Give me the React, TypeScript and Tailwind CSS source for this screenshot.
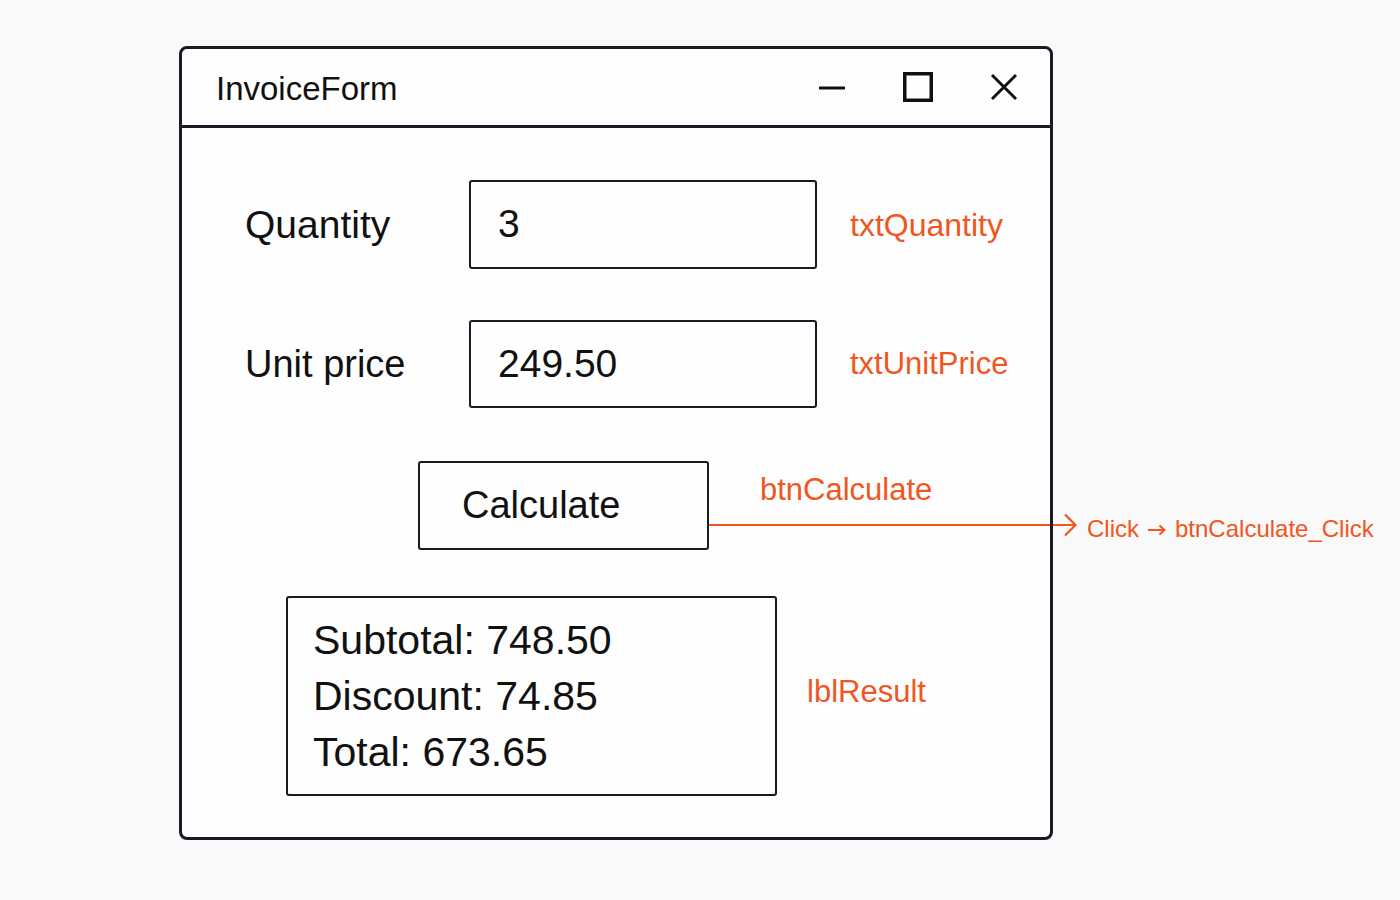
export default function App() {
  return (
    <div className="min-h-screen bg-[#f9f9f9] pt-[46px] pl-[179px] font-['Liberation_Sans',Arial,sans-serif] text-[#111]">
      <div className="relative w-[874px] h-[794px] rounded-[8px] bg-[#fefefe]">
        {/* window frame sits above the content so the event connector runs under it */}
        <div className="pointer-events-none absolute inset-0 z-10 rounded-[8px] border-[3px] border-[#161b26]" />

        <div className="flex flex-col p-[3px]">
          {/* Title bar */}
          <div className="flex h-[79px] items-center justify-between border-b-[3px] border-[#161b26] pl-[34px] pr-[31px]">
            <span className="pt-[3px] text-[33px] leading-none">InvoiceForm</span>
            <div className="flex items-center gap-[56px]">
              <svg width="30" height="30" viewBox="0 0 30 30" fill="none" stroke="#111" strokeWidth="3">
                <path d="M2 16h26" />
              </svg>
              <svg width="30" height="30" viewBox="0 0 30 30" fill="none" stroke="#111" strokeWidth="3.5">
                <rect x="1.75" y="1.75" width="26.5" height="26.5" />
              </svg>
              <svg width="30" height="30" viewBox="0 0 30 30" fill="none" stroke="#111" strokeWidth="3">
                <path d="M3 3l24 24M27 3L3 27" />
              </svg>
            </div>
          </div>

          {/* Quantity */}
          <div className="mt-[52px] flex items-center pl-[63px]">
            <span className="w-[224px] shrink-0 text-[39px] leading-none">Quantity</span>
            <div className="flex h-[89px] w-[348px] shrink-0 items-center rounded-[3px] border-2 border-[#161b26] pl-[27px] text-[39px]">
              3
            </div>
            <span className="ml-[33px] whitespace-nowrap text-[32px] text-[#f0561d]">txtQuantity</span>
          </div>

          {/* Unit price */}
          <div className="mt-[51px] flex items-center pl-[63px]">
            <span className="w-[224px] shrink-0 text-[38px] leading-none">Unit price</span>
            <div className="flex h-[88px] w-[348px] shrink-0 items-center rounded-[3px] border-2 border-[#161b26] pl-[27px] text-[39px]">
              249.50
            </div>
            <span className="ml-[33px] whitespace-nowrap text-[31px] text-[#f0561d]">txtUnitPrice</span>
          </div>

          {/* Calculate button + click handler annotation */}
          <div className="mt-[53px] flex pl-[236px]">
            <button className="flex h-[89px] w-[291px] shrink-0 items-center rounded-[3px] border-2 border-[#161b26] pl-[42px] text-[38px]">
              Calculate
            </button>
            <div className="flex shrink-0 flex-col">
              <span className="whitespace-nowrap pl-[51px] pt-[14px] text-[31px] leading-[30px] text-[#f0561d]">btnCalculate</span>
              <div className="mt-[8px] flex h-[24px] items-center">
                <div className="h-[2px] w-[352px] shrink-0 bg-[#f0561d]" />
                <svg className="shrink-0" width="16" height="24" viewBox="0 0 16 24" fill="none" stroke="#f0561d" strokeWidth="2.2">
                  <path d="M0 12h14M4 1.5l10.5 10.5L4 22.5" />
                </svg>
                <span className="ml-[10px] flex items-center whitespace-nowrap pt-[8px] text-[24px] text-[#f0561d]">
                  Click
                  <svg className="mx-[9px] mt-[2px]" width="18" height="12" viewBox="0 0 18 12" fill="none" stroke="#f0561d" strokeWidth="2">
                    <path d="M0 6h16M11.5 1.5L16.5 6l-5 4.5" />
                  </svg>
                  btnCalculate_Click
                </span>
              </div>
            </div>
          </div>

          {/* Result label */}
          <div className="mt-[46px] flex items-center pl-[104px]">
            <div className="h-[200px] w-[491px] shrink-0 rounded-[3px] border-2 border-[#161b26] pl-[25px] pt-[14px] text-[41px] leading-[56px]">
              <div>Subtotal: 748.50</div>
              <div>Discount: 74.85</div>
              <div>Total: 673.65</div>
            </div>
            <span className="ml-[30px] whitespace-nowrap pb-[8px] text-[31px] text-[#f0561d]">lblResult</span>
          </div>
        </div>
      </div>
    </div>
  );
}
